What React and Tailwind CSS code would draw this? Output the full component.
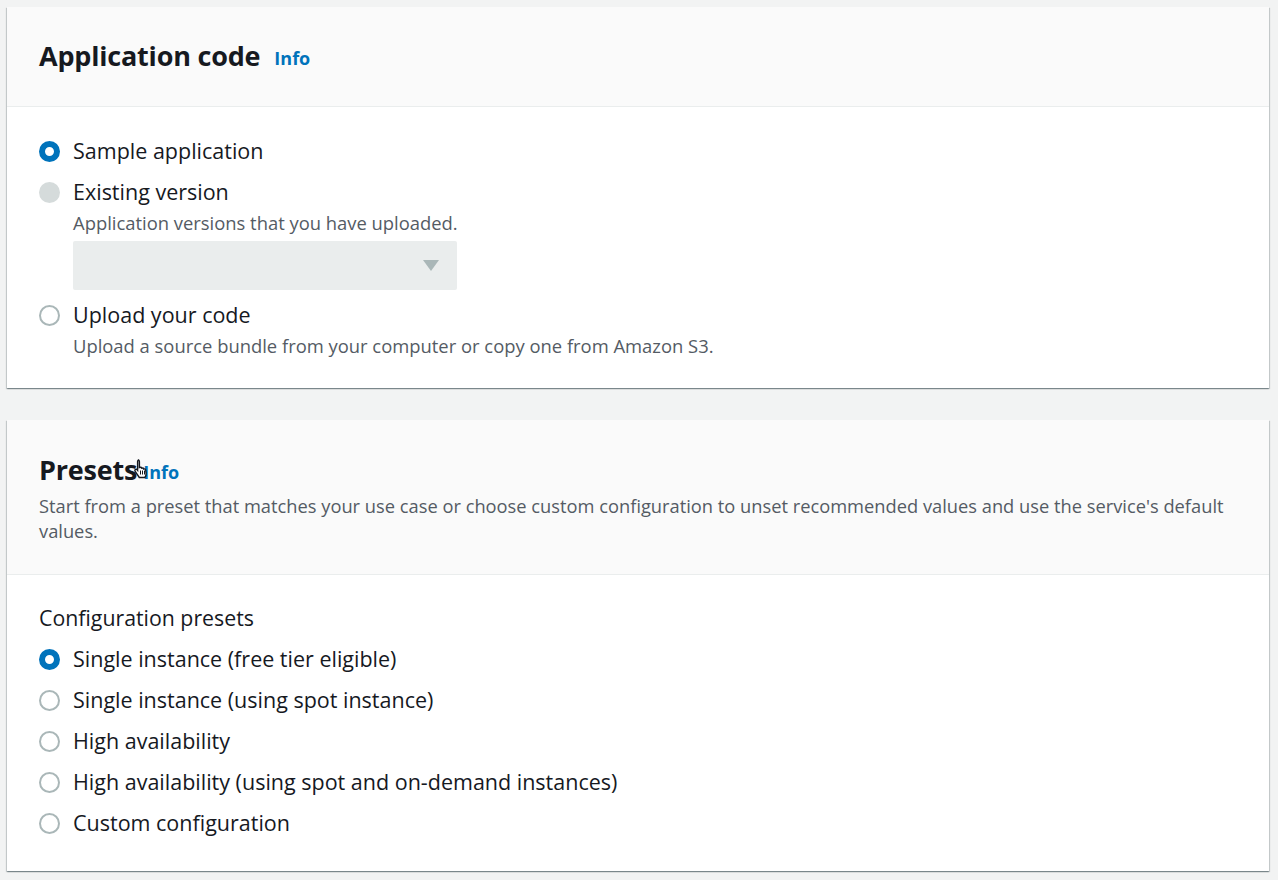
import React from "react";

const FONT = { fontFamily: '"Open Sans", "Noto Sans", Arial, sans-serif' };

function Radio({ state }) {
  if (state === "checked") {
    return (
      <span className="inline-block w-[21px] h-[21px] rounded-full border-[6px] border-[#0073bb] bg-white shrink-0" />
    );
  }
  if (state === "disabled") {
    return <span className="inline-block w-[21px] h-[21px] rounded-full bg-[#d5dbdb] shrink-0" />;
  }
  return (
    <span className="inline-block w-[21px] h-[21px] rounded-full border-2 border-[#aab7b8] bg-white shrink-0" />
  );
}

function RadioRow({ state, label, className = "" }) {
  return (
    <div className={"flex items-center h-[36px] " + className}>
      <div className="w-[34px] flex items-center">
        <Radio state={state} />
      </div>
      <span className="text-[21.5px] text-[#16191f] leading-[36px]">{label}</span>
    </div>
  );
}

function Desc({ children, className = "" }) {
  return (
    <div className={"pl-[34px] text-[18.4px] leading-[25px] text-[#545b64] " + className}>{children}</div>
  );
}

function Cursor() {
  return (
    <svg
      className="absolute left-[94px] top-[6px]"
      width="16"
      height="21"
      viewBox="0 0 16 20"
    >
      <path
        d="M5 1.5c.8 0 1.4.6 1.4 1.4V9l.6-.2c.8-.2 1.5.2 1.7.9l.3-.1c.8-.2 1.5.2 1.7.9l.3-.1c.8-.2 1.6.3 1.7 1.1l.4 3.2c.2 1.7-.3 3.1-1.3 4.3H6.3L2.2 12.8c-.5-.6-.4-1.4.2-1.8.6-.4 1.4-.3 1.8.3l.4.5V2.9c0-.8.6-1.4 1.4-1.4z"
        fill="#fff"
        stroke="#16191f"
        strokeWidth="1.4"
      />
      <path d="M7.5 12v4M9.5 12v4M11.5 12v4" stroke="#16191f" strokeWidth="1" />
    </svg>
  );
}

const SHADOW =
  "shadow-[0_1px_1px_0_rgba(0,28,36,0.3),1px_1px_1px_0_rgba(0,28,36,0.15),-1px_1px_1px_0_rgba(0,28,36,0.15)]";

export default function App() {
  return (
    <div className="min-h-[880px] w-[1278px] bg-[#f2f3f3] pt-[7px] pb-[8px]" style={FONT}>
      {/* Card 1 */}
      <div className={"ml-[7px] w-[1262px] bg-white " + SHADOW}>
        <div className="h-[100px] bg-[#fafafa] border-b border-[#eaeded] px-[32px] flex items-center">
          <h2 className="text-[27px] font-bold text-[#16191f] tracking-[-0.2px]">Application code</h2>
          <a className="ml-[14px] mt-[4px] text-[18px] font-bold text-[#0073bb]">Info</a>
        </div>
        <div className="px-[32px] pt-[26px] pb-[30px]">
          <RadioRow state="checked" label="Sample application" />
          <RadioRow state="disabled" label="Existing version" className="mt-[5px]" />
          <Desc>Application versions that you have uploaded.</Desc>
          <div className="ml-[34px] mt-[6px] w-[384px] h-[49px] bg-[#eaeded] rounded-[2px] flex items-center justify-end pr-[18px]">
            <svg width="16" height="12" viewBox="0 0 16 12">
              <path d="M0 0h16L8 11z" fill="#aab7b8" />
            </svg>
          </div>
          <RadioRow state="unchecked" label="Upload your code" className="mt-[7px]" />
          <Desc>Upload a source bundle from your computer or copy one from Amazon S3.</Desc>
        </div>
      </div>

      {/* Card 2 */}
      <div className={"mt-[32px] ml-[7px] w-[1262px] bg-white " + SHADOW}>
        <div className="bg-[#fafafa] border-b border-[#eaeded] px-[32px] pt-[32px] pb-[31px]">
          <div className="relative flex items-center h-[36px]">
            <h2 className="text-[27px] font-bold text-[#16191f] tracking-[-0.2px]">Presets</h2>
            <span className="ml-[6px] mt-[4px] text-[18px] font-bold text-[#0073bb]">Info</span>
            <Cursor />
          </div>
          <p className="mt-[5px] text-[18.3px] leading-[25px] text-[#545b64]">
            Start from a preset that matches your use case or choose custom configuration to unset recommended values and use the service's default values.
          </p>
        </div>
        <div className="px-[32px] pt-[30px] pb-[30px]">
          <div className="text-[21.3px] leading-[26px] text-[#16191f]">Configuration presets</div>
          <div className="mt-[10px] flex flex-col gap-[5px]">
            <RadioRow state="checked" label="Single instance (free tier eligible)" />
            <RadioRow state="unchecked" label="Single instance (using spot instance)" />
            <RadioRow state="unchecked" label="High availability" />
            <RadioRow state="unchecked" label="High availability (using spot and on-demand instances)" />
            <RadioRow state="unchecked" label="Custom configuration" />
          </div>
        </div>
      </div>
    </div>
  );
}
